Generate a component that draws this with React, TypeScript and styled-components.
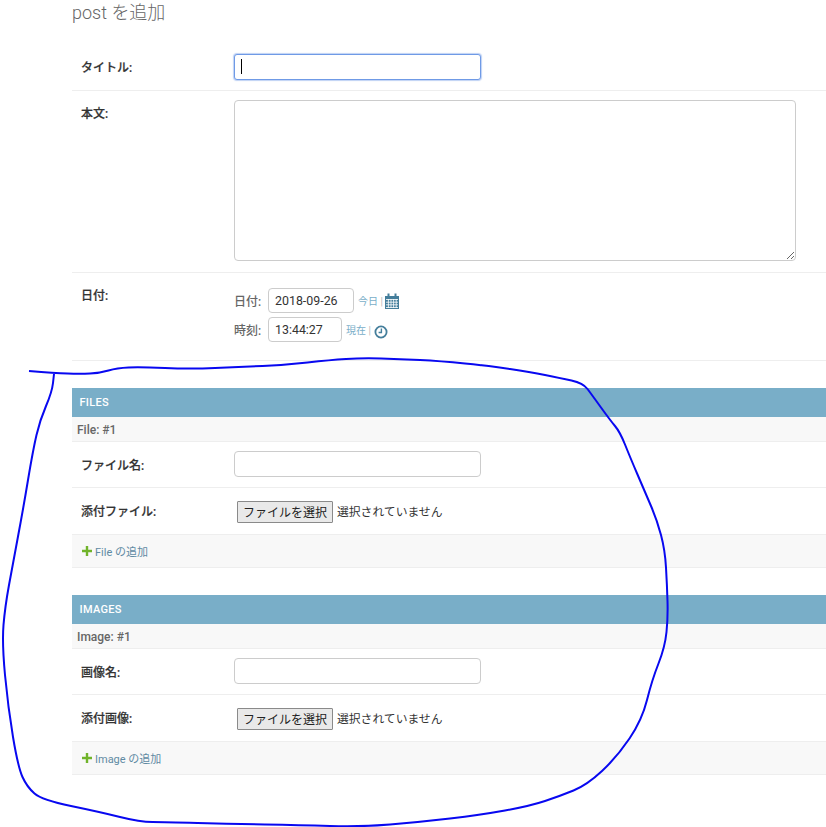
import React from 'react';
import styled, {createGlobalStyle} from 'styled-components';

const GlobalStyle = createGlobalStyle`
  html, body {
    margin: 0;
    padding: 0;
    background: #fff;
    font-family: Roboto, "Noto Sans CJK JP", sans-serif;
    color: #333;
    font-size: 13px;
  }
`;

// the hand drawn loop, points read off the screenshot
const loop = [
  [29, 371], [55, 373], [80, 374], [100, 373], [117, 368], [140, 367], [190, 369], [240, 367], [285, 365],
  [330, 360], [362, 358], [400, 359], [440, 361], [490, 366], [530, 372], [560, 378], [583, 383], [592, 395],
  [610, 420], [620, 432], [630, 457], [645, 492], [657, 520], [665, 550], [667, 585], [668, 617], [665, 647],
  [652, 680], [642, 720], [617, 757], [587, 785], [560, 796], [530, 806], [480, 815], [420, 822], [360, 827],
  [300, 825], [230, 824], [165, 822], [140, 822], [100, 812], [42, 800], [27, 787], [18, 767], [8, 707],
  [2, 643], [5, 607], [13, 563], [23, 510], [33, 450], [40, 420], [52, 392], [54, 374],
];

const loopPath = () => {
  let d = `M${loop[0][0]} ${loop[0][1]}`;
  for (let i = 1; i < loop.length - 1; i++) {
    const mx = (loop[i][0] + loop[i + 1][0]) / 2;
    const my = (loop[i][1] + loop[i + 1][1]) / 2;
    d += `Q${loop[i][0]} ${loop[i][1]} ${mx} ${my}`;
  }
  const last = loop[loop.length - 1];
  return `${d}L${last[0]} ${last[1]}`;
};

const CalendarIcon = () => (
  <svg width="14" height="16" viewBox="0 0 14 16">
    <path fill="#447e9b" d="M0 3h14v13H0z" />
    <path fill="#447e9b" d="M2.5 0.5h2v4h-2zM9.5 0.5h2v4h-2z" />
    <path stroke="#fff" strokeWidth="0.8" fill="none" d="M1 6.5h12M1 9.2h12M1 11.8h12M1 14.5h12M3.4 6v9M6 6v9M8.6 6v9M11.2 6v9" />
  </svg>
);

const ClockIcon = () => (
  <ClockSvg width="14" height="14" viewBox="0 0 14 14">
    <circle cx="7" cy="7" r="5.6" fill="none" stroke="#447e9b" strokeWidth="1.8" />
    <path d="M7.4 3.5v4H4.6" fill="none" stroke="#447e9b" strokeWidth="1.4" />
  </ClockSvg>
);

const PlusIcon = () => (
  <svg width="10" height="10" viewBox="0 0 10 10">
    <path fill="#70b32a" d="M3.8 0h2.4v3.8H10v2.4H6.2V10H3.8V6.2H0V3.8h3.8z" />
  </svg>
);

const InlineGroup = ({name, addLabel, fieldLabel, fileLabel, item}: {name: string; addLabel: string; fieldLabel: string; fileLabel: string; item: string}) => (
  <Group>
    <GroupTitle>{name}</GroupTitle>
    <ItemTitle>{item}</ItemTitle>
    <NameRow>
      <FieldLabel>{fieldLabel}:</FieldLabel>
      <TextInput />
    </NameRow>
    <FileRow>
      <FieldLabel>{fileLabel}:</FieldLabel>
      <FileButton>ファイルを選択</FileButton>
      <FileStatus>選択されていません</FileStatus>
    </FileRow>
    <AddRow>
      <PlusIcon />
      <AddLink>{addLabel}</AddLink>
    </AddRow>
  </Group>
);

const App = () => {
  return (
    <Page>
      <GlobalStyle />
      <Heading>post を追加</Heading>
      <TitleRow>
        <FieldLabel>タイトル:</FieldLabel>
        <FocusInput>
          <Caret />
        </FocusInput>
      </TitleRow>
      <BodyRow>
        <BodyLabel>本文:</BodyLabel>
        <BodyArea />
      </BodyRow>
      <DateRow>
        <FieldLabel>日付:</FieldLabel>
        <DateFields>
          <DateLine>
            <DateLabel>日付:</DateLabel>
            <DateInput $width={86} value="2018-09-26" readOnly />
            <Shortcut>今日 <Pipe>|</Pipe></Shortcut>
            <CalendarIcon />
          </DateLine>
          <DateLine>
            <DateLabel>時刻:</DateLabel>
            <DateInput $width={74} value="13:44:27" readOnly />
            <Shortcut>現在 <Pipe>|</Pipe></Shortcut>
            <ClockIcon />
          </DateLine>
        </DateFields>
      </DateRow>
      <InlineGroup name="FILES" item="File: #1" fieldLabel="ファイル名" fileLabel="添付ファイル" addLabel="File の追加" />
      <InlineGroup name="IMAGES" item="Image: #1" fieldLabel="画像名" fileLabel="添付画像" addLabel="Image の追加" />
      <Scribble width="826" height="827" viewBox="0 0 826 827">
        <path fill="none" stroke="#0808f0" strokeWidth="2" strokeLinejoin="round" d={loopPath()} />
      </Scribble>
    </Page>
  );
};

export default App;

const Page = styled.div`
  position: relative;
  width: 826px;
  height: 827px;
  padding-left: 72px;
  box-sizing: border-box;
  overflow: hidden;
`;
const Heading = styled.h1`
  margin: 0;
  height: 45px;
  padding-top: 2px;
  box-sizing: border-box;
  font-size: 18px;
  line-height: 22px;
  font-weight: 300;
  color: #666;
`;
const FormRow = styled.div`
  display: flex;
  border-bottom: 1px solid #eee;
  padding: 0 0 0 9px;
  box-sizing: border-box;
`;
const FieldLabel = styled.label`
  width: 153px;
  flex: none;
  font-size: 12px;
  line-height: 18px;
  font-weight: 500;
  color: #333;
  -webkit-text-stroke: 0.2px #333;
`;
const TitleRow = styled(FormRow)`
  height: 46px;
  align-items: center;
  padding-bottom: 2px;

  ${FieldLabel} {
    margin-top: 2px;
  }
`;
const BodyRow = styled(FormRow)`
  height: 182px;
  padding-top: 9px;
  align-items: flex-start;
`;
const DateRow = styled(FormRow)`
  height: 88px;
  padding-top: 14px;
  align-items: flex-start;
`;
const BodyLabel = styled(FieldLabel)`
  padding-top: 5px;
`;
const TextInput = styled.input`
  width: 247px;
  height: 26px;
  padding: 0 6px;
  box-sizing: border-box;
  border: 1px solid #ccc;
  border-radius: 4px;
  outline: none;
  background: #fff;
`;
const FocusInput = styled.div`
  width: 247px;
  height: 26px;
  padding: 4px 6px;
  box-sizing: border-box;
  border: 1px solid #6f9ae6;
  box-shadow: 0 0 1px 1px rgba(111, 154, 230, 0.45);
  border-radius: 3px;
  background: #fff;
`;
const Caret = styled.div`
  width: 1px;
  height: 15px;
  background: #000;
`;
const BodyArea = styled.textarea`
  width: 562px;
  height: 161px;
  margin: 0;
  padding: 5px 6px;
  box-sizing: border-box;
  border: 1px solid #ccc;
  border-radius: 4px;
  outline: none;
  background: #fff;
`;
const DateFields = styled.div`
  display: flex;
  flex-direction: column;
  gap: 4px;
  margin-top: 1px;
`;
const DateLine = styled.div`
  display: flex;
  align-items: center;
  height: 25px;
`;
const DateLabel = styled.span`
  width: 34px;
  flex: none;
  font-size: 12px;
  font-weight: 500;
  color: #666;
`;
const DateInput = styled.input<{$width: number}>`
  width: ${({$width}) => $width}px;
  height: 25px;
  padding: 0 6px;
  box-sizing: border-box;
  border: 1px solid #ccc;
  border-radius: 4px;
  outline: none;
  font-family: Roboto, sans-serif;
  font-size: 12.4px;
  color: #333;
`;
const Shortcut = styled.span`
  margin: 0 2px 0 4px;
  font-size: 10px;
  color: #79aec8;
  white-space: pre;
`;
const Pipe = styled.span`
  color: #bbb;
`;
const ClockSvg = styled.svg`
  margin-top: 4px;
  margin-left: 1px;
`;
const Group = styled.section`
  margin-top: 27px;
`;
const GroupTitle = styled.h2`
  margin: 0;
  height: 29px;
  padding: 0 7.5px;
  box-sizing: border-box;
  background: #79aec8;
  color: #fff;
  font-size: 11px;
  line-height: 29px;
  font-weight: 500;
  letter-spacing: 0.3px;
`;
const ItemTitle = styled.h3`
  margin: 0;
  height: 25px;
  padding: 1px 5px 0;
  box-sizing: border-box;
  background: #f8f8f8;
  border-bottom: 1px solid #eee;
  color: #666;
  font-size: 12px;
  line-height: 24px;
  font-weight: 500;
`;
const NameRow = styled(FormRow)`
  height: 46px;
  align-items: center;
  padding-bottom: 2px;

  ${FieldLabel} {
    margin-top: 4px;
  }
`;
const FileRow = styled(FormRow)`
  height: 47px;
  align-items: center;
  padding-top: 2px;
`;
const FileButton = styled.button`
  width: 96px;
  height: 22px;
  margin: 0 0 0 3px;
  padding: 0 0 2px;
  flex: none;
  background: #e9e9e9;
  border: 1px solid #8a8a8a;
  border-radius: 1px;
  color: #222;
  font-family: "Noto Sans CJK JP", sans-serif;
  font-size: 12px;
`;
const FileStatus = styled.span`
  margin-left: 4px;
  margin-bottom: 4px;
  font-size: 11.8px;
  color: #333;
`;
const AddRow = styled.div`
  display: flex;
  align-items: center;
  height: 33px;
  padding-left: 10px;
  box-sizing: border-box;
  background: #f8f8f8;
  border-bottom: 1px solid #eee;
`;
const AddLink = styled.a`
  margin-left: 3px;
  font-size: 11px;
  color: #5f8aa3;
`;
const Scribble = styled.svg`
  position: absolute;
  top: 0;
  left: 0;
  pointer-events: none;
`;
